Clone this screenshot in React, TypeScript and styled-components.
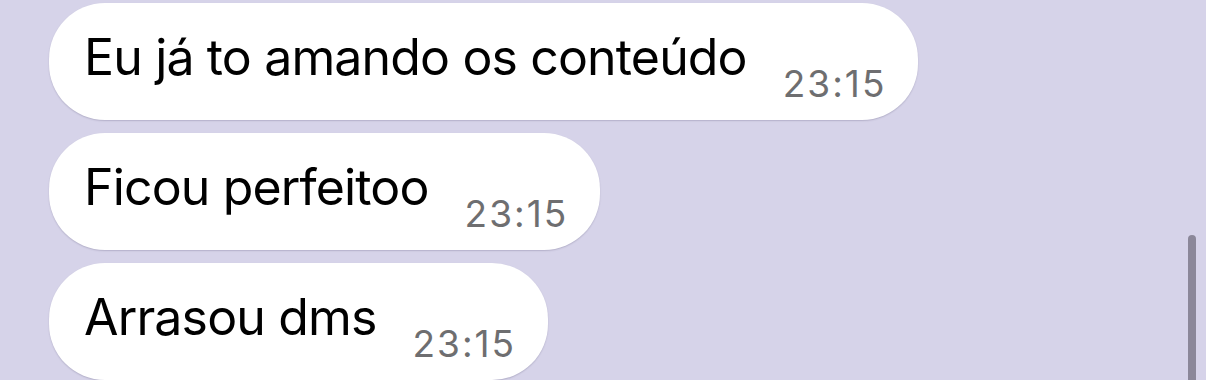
import React from 'react';
import styled, { createGlobalStyle } from 'styled-components';

const GlobalStyle = createGlobalStyle`
  html, body {
    margin: 0;
    padding: 0;
    background: #d6d3e9;
  }
  body {
    font-family: 'Inter', 'Roboto', 'Liberation Sans', sans-serif;
    -webkit-font-smoothing: antialiased;
  }
`;

const Screen = styled.div`
  position: relative;
  width: 1206px;
  height: 380px;
  overflow: hidden;
  background: #d6d3e9;
`;

const Thread = styled.div`
  display: flex;
  flex-direction: column;
  align-items: flex-start;
  gap: 13px;
  padding: 3px 0 0 49px;
`;

const Bubble = styled.div`
  display: flex;
  align-items: flex-start;
  box-sizing: border-box;
  height: 117px;
  padding: 0 32px 0 35px;
  background: #ffffff;
  border-radius: 56px;
  box-shadow: 0 1px 1.5px rgba(60, 55, 90, 0.22);
`;

const Text = styled.span`
  font-size: 50px;
  line-height: 60px;
  margin-top: 24px;
  color: #000000;
  letter-spacing: -0.85px;
  white-space: nowrap;
`;

const Time = styled.span`
  font-size: 37px;
  line-height: 44px;
  margin: 59px 0 0 36px;
  color: #6e6e70;
  letter-spacing: 2px;
  white-space: nowrap;
`;

const ScrollThumb = styled.div`
  position: absolute;
  right: 10px;
  top: 235px;
  width: 8px;
  height: 160px;
  border-radius: 4px;
  background: #8b8799;
`;

const messages = [
  { text: 'Eu já to amando os conteúdo', time: '23:15' },
  { text: 'Ficou perfeitoo', time: '23:15' },
  { text: 'Arrasou dms', time: '23:15' },
];

export default function App() {
  return (
    <Screen>
      <GlobalStyle />
      <Thread>
        {messages.map((m, i) => (
          <Bubble key={i}>
            <Text>{m.text}</Text>
            <Time>{m.time}</Time>
          </Bubble>
        ))}
      </Thread>
      <ScrollThumb />
    </Screen>
  );
}
